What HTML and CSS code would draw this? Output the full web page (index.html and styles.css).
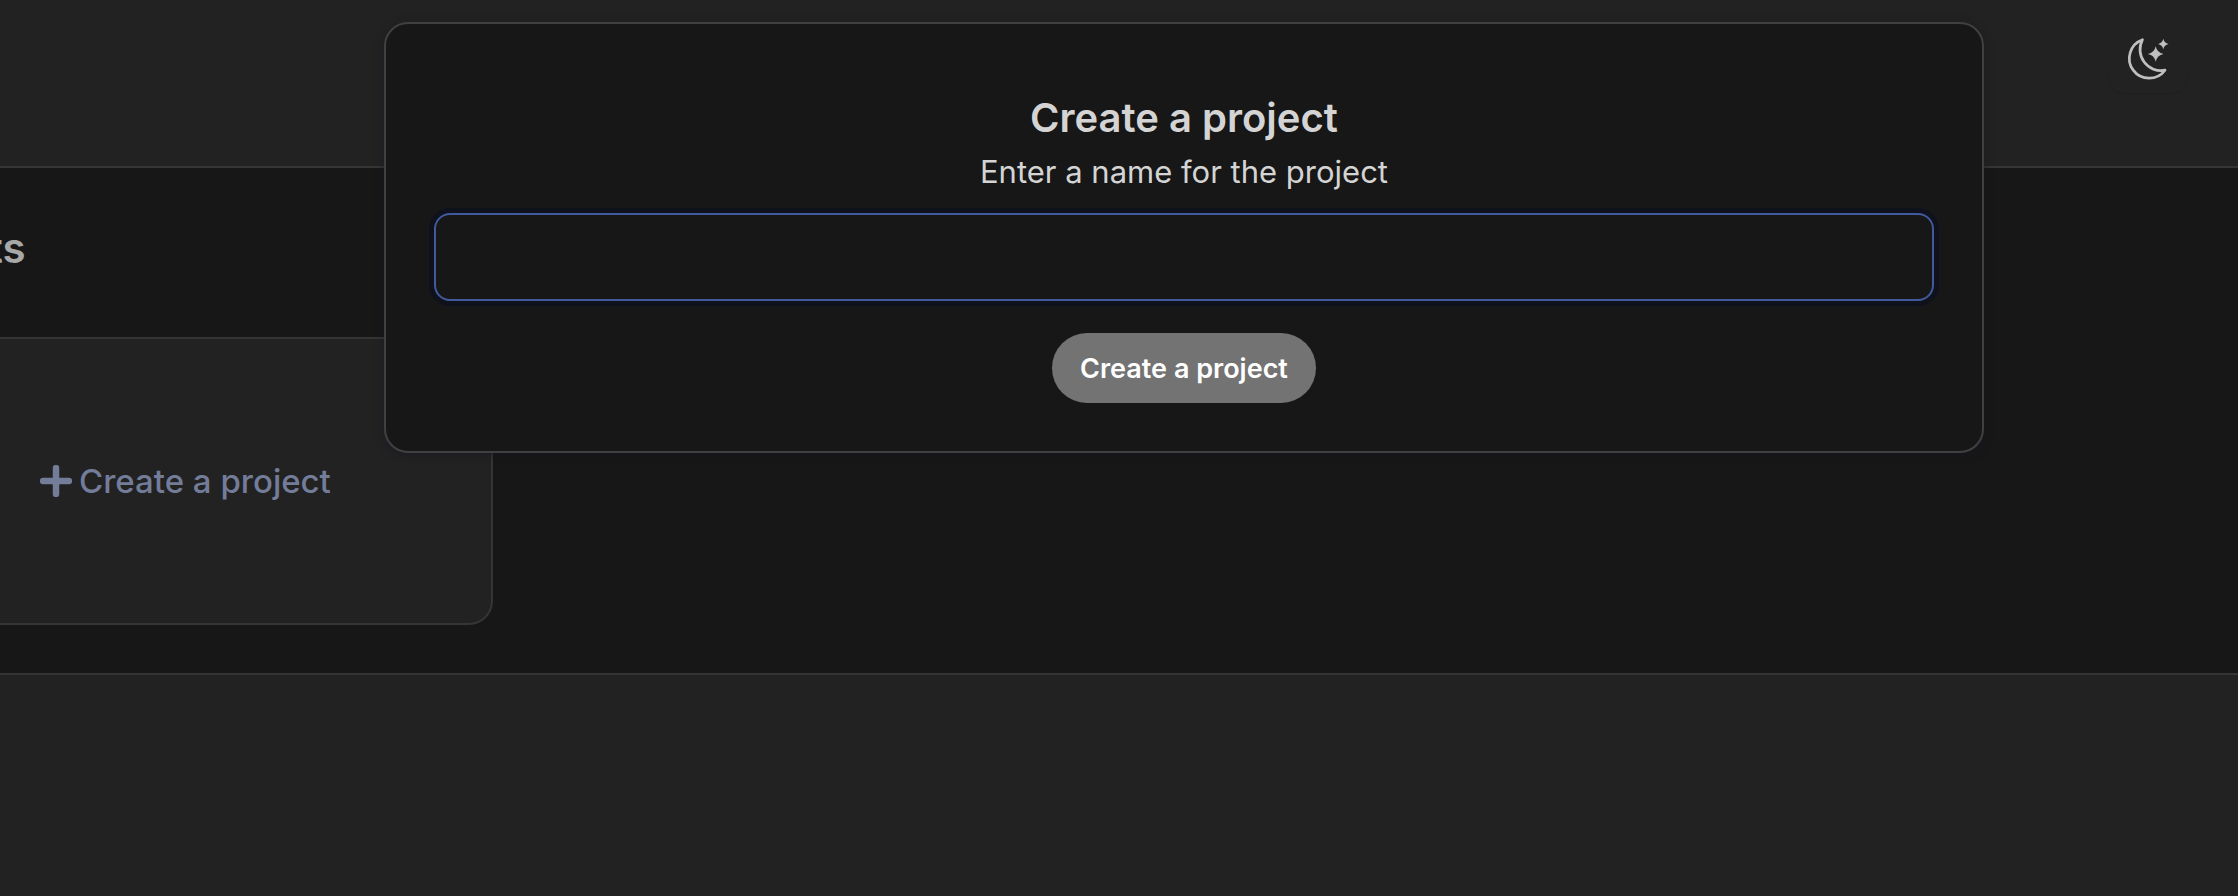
FILE: index.html
```html
<!DOCTYPE html>
<html lang="en">
<head>
<meta charset="utf-8">
<meta name="viewport" content="width=device-width, initial-scale=1">
<title>Create a project</title>
<link rel="stylesheet" href="styles.css">
</head>
<body>
<header class="topbar">
  <button class="theme-toggle" type="button" aria-label="Toggle theme">
    <svg viewBox="0 0 48 48" aria-hidden="true">
      <path class="moon" d="M18.5 5.7A19.8 19.8 0 1 0 41 36.2A21 21 0 0 1 18.5 5.7Z"/>
      <path class="star" d="M31.7 12.2Q33 18.7 39.5 20Q33 21.3 31.7 27.8Q30.4 21.3 23.9 20Q30.4 18.7 31.7 12.2Z"/>
      <path class="star" d="M39.3 4.8Q40.3 9 44.5 10Q40.3 11 39.3 15.2Q38.3 11 34.1 10Q38.3 9 39.3 4.8Z"/>
    </svg>
  </button>
</header>
<main class="projects">
  <h1 class="heading">ts</h1>
  <button class="create-card" type="button">
    <svg class="plus" viewBox="0 0 32 32" aria-hidden="true"><path d="M16 3V29M3 16H29"/></svg>
    <span>Create a project</span>
  </button>
</main>
<div class="modal" role="dialog" aria-modal="true" aria-labelledby="modal-title">
  <h2 class="modal-title" id="modal-title">Create a project</h2>
  <form class="modal-form">
    <label class="modal-label" for="project-name">Enter a name for the project</label>
    <input class="modal-input" id="project-name" type="text">
    <button class="modal-submit" type="submit">Create a project</button>
  </form>
</div>
</body>
</html>
```
FILE: styles.css
```css
* {
  box-sizing: border-box;
}

body {
  margin: 0;
  min-height: 100vh;
  overflow-x: hidden;
  background: #222;
  color: #d4d4d4;
  font-family: Inter, "Liberation Sans", sans-serif;
}

button,
input {
  font: inherit;
}

.topbar {
  display: flex;
  justify-content: flex-end;
  padding: 23px 50px 73px;
  border-bottom: 2px solid #353535;
}

.theme-toggle {
  display: grid;
  place-items: center;
  width: 80px;
  height: 70px;
  padding: 0;
  border: 0;
  border-radius: 16px;
  background: #222;
  box-shadow: 0 1px 1px rgba(0, 0, 0, 0.08);
}

.theme-toggle svg {
  width: 48px;
  height: 48px;
}

.moon {
  fill: none;
  stroke: #bfbfbf;
  stroke-width: 2.7;
  stroke-linejoin: round;
}

.star {
  fill: #bfbfbf;
}

.projects {
  padding: 44px 0 48px;
  border-bottom: 2px solid #353535;
  background: #171717;
}

.heading {
  margin: 0 0 53px -12px;
  color: #a8a8a8;
  font-size: 42px;
  font-weight: 600;
  line-height: 72px;
}

.create-card {
  display: flex;
  align-items: center;
  gap: 7px;
  width: 493px;
  height: 288px;
  padding: 0 0 0 40px;
  border: 2px solid #353535;
  border-left: 0;
  border-radius: 0 0 24px 0;
  background: #222;
  color: #737c99;
  font-size: 33px;
  font-weight: 500;
}

.plus {
  width: 32px;
  height: 32px;
  fill: none;
  stroke: currentColor;
  stroke-width: 6.5;
  stroke-linecap: round;
}

.modal {
  position: absolute;
  top: 22px;
  left: 384px;
  right: 254px;
  padding: 64px 48px 48px;
  border: 2px solid #404040;
  border-radius: 24px;
  background: #171717;
  box-shadow: 0 2px 8px rgba(20, 24, 38, 0.5);
}

.modal-title {
  margin: 0;
  font-size: 40px;
  font-weight: 600;
  line-height: 60px;
  text-align: center;
}

.modal-form {
  display: flex;
  flex-direction: column;
  align-items: center;
}

.modal-label {
  margin-bottom: 17px;
  font-size: 31px;
  line-height: 48px;
}

.modal-input {
  width: 100%;
  height: 88px;
  padding: 0 24px;
  border: 2px solid #415a9c;
  border-radius: 16px;
  outline: 0;
  background: #171717;
  color: #d4d4d4;
  font-size: 32px;
  box-shadow: 0 0 0 5px #0f121c;
}

.modal-submit {
  height: 70px;
  margin-top: 32px;
  padding: 0 28px;
  border: 0;
  border-radius: 35px;
  background: #737373;
  color: #fff;
  font-size: 27px;
  font-weight: 600;
}
```
